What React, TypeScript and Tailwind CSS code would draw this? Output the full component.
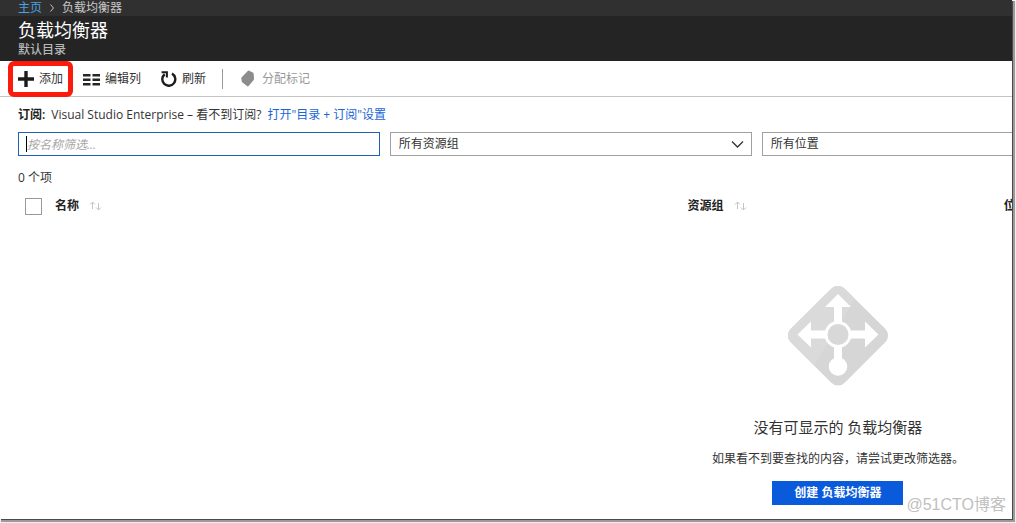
import React from "react";

interface ToolbarButtonProps {
  label: string;
  icon: React.ReactNode;
  disabled?: boolean;
  highlighted?: boolean;
}

const AddIcon = () => (
  <svg width="16" height="16" viewBox="0 0 16 16" fill="#1c1c1c" aria-hidden="true">
    <path d="M6.3 0h3.4v6.3H16v3.4H9.7V16H6.3V9.7H0V6.3h6.3z" />
  </svg>
);

const ColumnsIcon = () => (
  <svg width="17" height="16" viewBox="0 0 17 16" fill="#262626" aria-hidden="true">
    <path d="M0 3h7.5v2.4H0zM9.5 3H17v2.4H9.5zM0 7.5h7.5v2.4H0zM9.5 7.5H17v2.4H9.5zM0 12h7.5v2.4H0zM9.5 12H17v2.4H9.5z" />
  </svg>
);

const RefreshIcon = () => (
  <svg width="16" height="18" viewBox="0 0 16 18" fill="none" stroke="#1c1c1c" aria-hidden="true">
    <path d="M11 3.6a6.500 6.500 0 1 1-7.300.6" strokeWidth="2.400" />
    <path d="M.6 2.200h5.300v5.400" strokeWidth="2" />
  </svg>
);

const TagIcon = () => (
  <svg width="18" height="17" viewBox="0 0 18 17" fill="#8c8c8c" aria-hidden="true">
    <path d="M8.800.9a1.200 1.200 0 0 1 1.400-.2l3.600 1.700a1.500 1.500 0 0 1 .8 1.200l.4 5.200a2 2 0 0 1-.5 1.500l-4.900 5.700a1.200 1.200 0 0 1-1.600.1L3.200 12.300a1.500 1.500 0 0 1-.5-1l-.4-2.800a1.500 1.500 0 0 1 .4-1.300z" />
  </svg>
);

const SortIcon = () => (
  <svg width="13" height="10" viewBox="0 0 13 10" fill="none" stroke="#c4c4c4" aria-hidden="true">
    <path d="M3.500 8V1M1 3.500L3.500 1 6 3.500M9.500 2v7M7 6.500L9.500 9 12 6.500" />
  </svg>
);

const LoadBalancerIcon = () => (
  <svg width="102" height="102" viewBox="0 0 102 102" aria-hidden="true">
    <path
      d="M44 4a9.500 9.500 0 0 1 14 0L98.500 44a9.500 9.500 0 0 1 0 13L58 97.500a9.500 9.500 0 0 1-14 0L3.500 57a9.500 9.500 0 0 1 0-13z"
      fill="#d6d6d6"
    />
    <path d="M44 4a9.500 9.500 0 0 1 14 0L68 14 27 80.500 3.500 57a9.500 9.500 0 0 1 0-13z" fill="#dadada" />
    <g fill="#fff">
      <path d="M51 9l13 13h-9v17h-8V22h-9z" />
      <path d="M10.500 49.500L24 36.500v9h15v8H24v9z" />
      <path d="M91.500 49.500L78 36.500v9H63v8h15v9z" />
      <path d="M47 59h8v18h-8z" />
      <circle cx="51" cy="81.500" r="9.300" />
      <circle cx="51" cy="49.500" r="13.500" />
    </g>
    <circle cx="51" cy="49.500" r="10.500" fill="#d8d8d8" />
  </svg>
);

const ToolbarButton = ({ label, icon, disabled, highlighted }: ToolbarButtonProps) => (
  <button
    type="button"
    disabled={disabled}
    className="relative flex items-center gap-[5px] text-[#333] disabled:text-[#999]"
  >
    {icon}
    <span>{label}</span>
    {highlighted && (
      <span className="absolute -inset-x-2.5 -inset-y-2.5 rounded-md border-[5px] border-[#fb1a0c]" />
    )}
  </button>
);

const FilterSelect = ({ label, option }: { label: string; option: string }) => (
  <div className="relative">
    <select
      aria-label={label}
      className="h-6 w-full appearance-none border border-[#a0a0a0] bg-white px-2 text-[#333]"
    >
      <option>{option}</option>
    </select>
    <svg
      className="pointer-events-none absolute top-2 right-2"
      width="13"
      height="9"
      viewBox="0 0 13 9"
      fill="none"
      stroke="#333"
      strokeWidth="1.3"
      aria-hidden="true"
    >
      <path d="M1 1.500l5.500 5.500L12 1.500" />
    </svg>
  </div>
);

const HeaderLabel = ({ text }: { text: string }) => (
  <span className="flex items-center gap-2.5">
    {text}
    <SortIcon />
  </span>
);

const App = () => {
  return (
    <div className="flex min-h-screen bg-white pr-1 pb-1 font-['Open_Sans','Noto_Sans_CJK_SC',sans-serif] text-xs text-[#333]">
      <div className="relative min-w-0 flex-1 overflow-hidden bg-white shadow-[1px_1px_0_#4a4a4a,2px_2px_1px_1px_#9a9a9a]">
        <header>
          <nav className="flex h-4 items-center gap-2 bg-[#303030] pl-[18px] leading-4 text-[#c8c8c8]">
            <a href="#home" className="text-[#4ba0e0]">
              主页
            </a>
            <svg width="4" height="8" viewBox="0 0 4 8" fill="none" stroke="#c8c8c8" aria-hidden="true">
              <path d="M.5.500L3.500 4 .5 7.500" />
            </svg>
            <span>负载均衡器</span>
          </nav>
          <div className="h-[45px] bg-[#242424] pt-1 pl-[18px]">
            <h1 className="text-lg leading-5 text-white">负载均衡器</h1>
            <p className="leading-5 font-medium text-[#b8b8b8]">默认目录</p>
          </div>
        </header>

        <div className="flex h-9 items-center gap-5 border-b border-[#c4c4c4] pl-[18px]">
          <ToolbarButton label="添加" icon={<AddIcon />} highlighted />
          <ToolbarButton label="编辑列" icon={<ColumnsIcon />} />
          <ToolbarButton label="刷新" icon={<RefreshIcon />} />
          <span className="-mx-1 h-5 w-px bg-[#999]" />
          <ToolbarButton label="分配标记" icon={<TagIcon />} disabled />
        </div>

        <main className="pl-[18px]">
          <p className="flex gap-1.5 pt-2.5 leading-4">
            <span className="font-semibold text-[#222]">订阅:</span>
            <span>Visual Studio Enterprise – 看不到订阅?</span>
            <a href="#subscriptions" className="text-[#1a66d6]">
              打开"目录 + 订阅"设置
            </a>
          </p>

          <div className="mt-[9px] grid grid-cols-[36.4%_36.4%_36.4%] gap-2.5">
            <div className="relative">
              <input
                type="text"
                aria-label="按名称筛选"
                placeholder="按名称筛选..."
                className="h-6 w-full border border-[#1f62b5] px-2 outline-none placeholder:text-[#a6a6a6] placeholder:italic"
              />
              <span className="absolute top-1 left-2 h-4 w-px bg-black" />
            </div>
            <FilterSelect label="资源组" option="所有资源组" />
            <FilterSelect label="位置" option="所有位置" />
          </div>

          <p className="mt-3.5 leading-4">0 个项</p>

          <table className="mt-2 w-[131%] table-fixed text-left">
            <thead>
              <tr className="h-6">
                <th className="w-[37px] pl-[7px]">
                  <input
                    type="checkbox"
                    aria-label="全选"
                    className="block size-[17px] appearance-none border border-[#999] bg-white"
                  />
                </th>
                <th className="w-1/2 font-bold text-[#222]">
                  <HeaderLabel text="名称" />
                </th>
                <th className="w-1/4 font-bold text-[#222]">
                  <HeaderLabel text="资源组" />
                </th>
                <th className="w-1/4 font-bold text-[#222]">
                  <HeaderLabel text="位置" />
                </th>
              </tr>
            </thead>
          </table>
        </main>

        <section className="flex w-[165.6%] flex-col items-center pt-[67px]">
          <LoadBalancerIcon />
          <h2 className="mt-7 text-[15px] leading-6">没有可显示的 负载均衡器</h2>
          <p className="mt-2.5 leading-5">如果看不到要查找的内容，请尝试更改筛选器。</p>
          <button
            type="button"
            className="mt-3 h-6 bg-[#0a5bdc] px-[22px] font-bold text-white"
          >
            创建 负载均衡器
          </button>
        </section>

        <span className="absolute right-1.5 bottom-1 font-['Liberation_Sans','Noto_Sans_CJK_SC',sans-serif] text-base leading-5 text-[#c0c0c0]">
          @51CTO博客
        </span>
      </div>
    </div>
  );
};

export default App;
